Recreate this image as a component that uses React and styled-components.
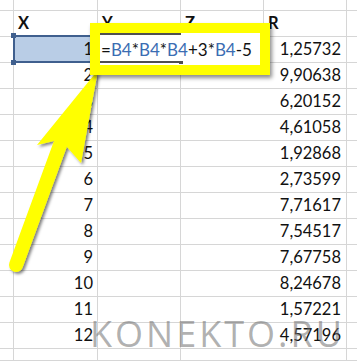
import React from 'react';
import styled, { createGlobalStyle } from 'styled-components';

const GlobalStyle = createGlobalStyle`
  html, body {
    margin: 0;
    padding: 0;
    background: #ffffff;
  }
  body {
    font-family: Lato, "Liberation Sans", sans-serif;
  }
`;

const Sheet = styled.div`
  position: relative;
  width: 357px;
  height: 361px;
  overflow: hidden;
  display: grid;
  grid-template-columns: 14px 84px 83px 83px 83px 1fr;
  grid-template-rows: 11px repeat(13, 26px) 1fr;
  font-size: 16.5px;
  color: #111;
  background: #fff;
`;

const Cell = styled.div`
  position: relative;
  box-sizing: border-box;
  display: flex;
  align-items: center;
  justify-content: ${(p) => (p.$align === 'right' ? 'flex-end' : 'flex-start')};
  grid-column: span ${(p) => p.$span || 1};
  padding: ${(p) => (p.$align === 'right' ? `0 ${p.$pad || 4}px 0 0` : '0 0 0 4px')};
  border-right: ${(p) => (p.$last ? 'none' : '1px solid #d6d6d6')};
  border-bottom: 1px solid #d6d6d6;
  font-weight: ${(p) => (p.$head ? 700 : 400)};
  white-space: nowrap;
  line-height: 1;
  background: ${(p) => (p.$selected ? '#b9cde6' : 'transparent')};

  ${(p) =>
    p.$selected &&
    `
    &::after {
      content: '';
      position: absolute;
      left: -1px;
      top: -2px;
      right: -1px;
      bottom: -1px;
      border: 2px solid #3f5f8e;
    }
  `}
`;

const Handle = styled.span`
  position: absolute;
  width: 5px;
  height: 5px;
  background: #3f5f8e;
  left: -3px;
  ${(p) => (p.$bottom ? 'bottom: -3px;' : 'top: -4px;')}
  z-index: 1;
`;

const ArrowLayer = styled.svg`
  position: absolute;
  left: 0;
  top: 0;
  pointer-events: none;
  z-index: 2;
`;

const Callout = styled.div`
  position: absolute;
  left: 90px;
  top: 23px;
  width: 180px;
  height: 52px;
  box-sizing: border-box;
  border: 10px solid #ffff00;
  background: #fff;
  box-shadow: 2px 3px 4px rgba(0, 0, 0, 0.45);
  z-index: 3;
`;

const EditCell = styled.div`
  position: relative;
  box-sizing: border-box;
  width: 81px;
  height: 30px;
  border-top: 2px solid #505050;
  border-bottom: 2px solid #505050;
  display: flex;
  align-items: center;
  padding: 2px 0 0 1px;
  font-size: 17px;
  white-space: nowrap;
  line-height: 1;
  color: #111;
`;

const EditHandle = styled.span`
  position: absolute;
  right: -2px;
  bottom: -3px;
  width: 4px;
  height: 3px;
  background: #505050;
`;

const Ref = styled.span`
  color: #3b6db3;
`;

const Watermark = styled.div`
  position: absolute;
  left: 90px;
  top: 316px;
  font-family: "Open Sans", "Liberation Sans", sans-serif;
  font-size: 36px;
  line-height: 36px;
  letter-spacing: 3px;
  color: rgba(110, 110, 110, 0.55);
  pointer-events: none;
  z-index: 4;
`;

const values = [
  '1,25732',
  '9,90638',
  '6,20152',
  '4,61058',
  '1,92868',
  '2,73599',
  '7,71617',
  '7,54517',
  '7,67758',
  '8,24678',
  '1,57221',
  '4,57196',
];

const headers = ['X', 'Y', 'Z', 'R'];

export default function App() {
  return (
    <>
      <GlobalStyle />
      <Sheet>
        {/* partial row above the headers */}
        <Cell />
        <Cell />
        <Cell />
        <Cell />
        <Cell />
        <Cell $last />

        <Cell />
        {headers.map((h) => (
          <Cell key={h} $head>
            {h}
          </Cell>
        ))}
        <Cell $last />

        {values.map((v, i) => (
          <React.Fragment key={i}>
            <Cell />
            <Cell $align="right" $selected={i === 0}>
              {i === 0 && <Handle />}
              {i === 0 && <Handle $bottom />}
              {i + 1}
            </Cell>
            <Cell />
            <Cell $span={2} $align="right" $pad={5}>
              {v}
            </Cell>
            <Cell $last />
          </React.Fragment>
        ))}

        {/* partial row below */}
        <Cell />
        <Cell />
        <Cell />
        <Cell $span={2} />
        <Cell $last />

        <ArrowLayer width="357" height="361" viewBox="0 0 357 361">
          <defs>
            <filter id="arrowShadow" x="-20%" y="-20%" width="140%" height="140%">
              <feDropShadow dx="2" dy="2" stdDeviation="1.6" floodColor="#000" floodOpacity="0.5" />
            </filter>
          </defs>
          <g filter="url(#arrowShadow)" fill="#ffff00">
            <line x1="60" y1="145" x2="16" y2="265" stroke="#ffff00" strokeWidth="14" strokeLinecap="round" />
            <polygon points="98,70 81,163 67,147 54,141 37,145" />
          </g>
        </ArrowLayer>

        <Callout>
          <EditCell>
            =<Ref>B4</Ref>*<Ref>B4</Ref>*<Ref>B4</Ref>+3*<Ref>B4</Ref>-5
            <EditHandle />
          </EditCell>
        </Callout>

        <Watermark>KONEKTO.RU</Watermark>
      </Sheet>
    </>
  );
}
